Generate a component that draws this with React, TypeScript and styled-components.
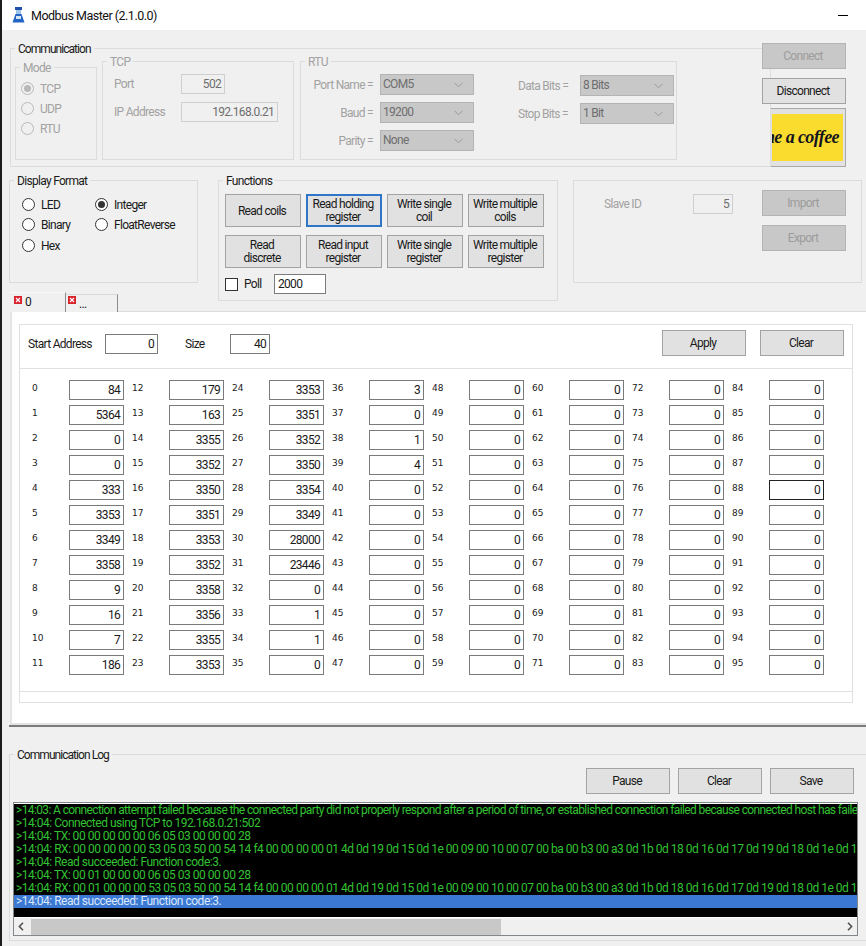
import * as React from "react";
import styled, { createGlobalStyle } from "styled-components";

const GlobalStyle = createGlobalStyle`
  html, body {
    margin: 0;
    padding: 0;
    background: #f0f0f0;
  }
  * {
    box-sizing: border-box;
  }
`;

const Window = styled.div`
  width: 866px;
  height: 946px;
  overflow: hidden;
  background: #f0f0f0;
  border-left: 2px solid #1c1c1c;
  color: #1a1a1a;
  font-family: Roboto, "Liberation Sans", sans-serif;
  font-size: 12px;
  line-height: 15px;
  letter-spacing: -0.7px;
`;

const TitleBar = styled.div`
  height: 30px;
  background: #fff;
  display: flex;
  align-items: center;
  padding-left: 10px;
  font-size: 12.5px;
  letter-spacing: -0.5px;
  color: #111;
`;
const TitleText = styled.span`
  margin-left: 6px;
`;
const MinimizeLine = styled.span`
  width: 10px;
  height: 1px;
  background: #000;
  margin-left: auto;
  margin-right: 18px;
`;

const TopRow = styled.div`
  display: flex;
  align-items: flex-start;
  padding: 13px 0 0 8px;
`;

const Group = styled.div<{ $w: number; $h: number; $mt?: number; $ml?: number }>`
  width: ${(p) => p.$w}px;
  height: ${(p) => p.$h}px;
  margin-top: ${(p) => p.$mt ?? 0}px;
  margin-left: ${(p) => p.$ml ?? 0}px;
  border: 1px solid #dcdcdc;
  flex: none;
`;
const Legend = styled.div<{ $off?: boolean; $tight?: boolean }>`
  width: fit-content;
  margin: -8px 0 -1px 4px;
  padding: 1px 3px 0;
  background: #f0f0f0;
  letter-spacing: ${(p) => (p.$tight ? "-0.95px" : "inherit")};
  color: ${(p) => (p.$off ? "#a2a2a2" : "#1a1a1a")};
`;

const CommRow = styled.div`
  display: flex;
  align-items: flex-end;
  gap: 5px;
  margin: 5px 0 0 4px;
`;

const ModeList = styled.div`
  display: flex;
  flex-direction: column;
  padding: 3px 0 0 5px;
`;
const OptionRow = styled.div<{ $off?: boolean }>`
  height: 20px;
  display: flex;
  align-items: center;
  gap: 6px;
  color: ${(p) => (p.$off ? "#a2a2a2" : "#1a1a1a")};
`;
const OptionText = styled.span`
  margin-top: 2px;
`;
const Radio = styled.span<{ $off?: boolean; $on?: boolean }>`
  width: 13px;
  height: 13px;
  flex: none;
  border-radius: 50%;
  border: 1px solid ${(p) => (p.$off ? "#b8b8b8" : "#333")};
  background: ${(p) => (p.$off ? "#f0f0f0" : "#fff")};
  display: flex;
  align-items: center;
  justify-content: center;
  &::after {
    content: "";
    width: 7px;
    height: 7px;
    border-radius: 50%;
    background: ${(p) => (p.$on ? (p.$off ? "#b8b8b8" : "#333") : "transparent")};
  }
`;

const TcpForm = styled.div`
  display: grid;
  grid-template-columns: 67px auto;
  justify-content: start;
  align-items: center;
  row-gap: 8px;
  padding: 5px 0 0 11px;
`;
const MutedLabel = styled.span`
  color: #a2a2a2;
`;
const TextBox = styled.div<{ $w: number; $off?: boolean; $focus?: boolean; $left?: boolean }>`
  width: ${(p) => p.$w}px;
  height: 20px;
  flex: none;
  padding: 1px ${(p) => (p.$left ? 0 : 3)}px 0 ${(p) => (p.$left ? 3 : 0)}px;
  display: flex;
  align-items: center;
  justify-content: ${(p) => (p.$left ? "flex-start" : "flex-end")};
  background: ${(p) => (p.$off ? "#f0f0f0" : "#fff")};
  color: ${(p) => (p.$off ? "#6e6e6e" : "#1a1a1a")};
  border: 1px solid ${(p) => (p.$off ? "#cfcfcf" : p.$focus ? "#222" : "#7a7a7a")};
`;

const RtuBody = styled.div`
  display: flex;
  padding-top: 5px;
`;
const RtuColumn = styled.div<{ $top: number; $gap: number; $ml?: number }>`
  display: flex;
  flex-direction: column;
  gap: ${(p) => p.$gap}px;
  padding-top: ${(p) => p.$top}px;
  margin-left: ${(p) => p.$ml ?? 0}px;
`;
const RtuRow = styled.div`
  display: flex;
  align-items: center;
`;
const RtuLabel = styled(MutedLabel)<{ $w: number; $right?: boolean }>`
  width: ${(p) => p.$w}px;
  padding-top: 2px;
  text-align: ${(p) => (p.$right ? "right" : "left")};
`;
const Select = styled.div`
  width: 94px;
  height: 21px;
  margin-left: 7px;
  padding: 0 10px 0 2px;
  display: flex;
  align-items: center;
  justify-content: space-between;
  background: #c8c8c8;
  border: 1px solid #b4b4b4;
  color: #6e6e6e;
`;
const Chevron = () => (
  <svg width="9" height="6" viewBox="0 0 9 6" fill="none" stroke="#999" strokeWidth="1">
    <path d="M0.5 0.8 L4.5 4.8 L8.5 0.8" />
  </svg>
);

const SideColumn = styled.div`
  display: flex;
  flex-direction: column;
  margin-left: -9px;
  flex: none;
`;
const WinButton = styled.button<{ $w?: number; $h?: number; $off?: boolean; $focus?: boolean; $mt?: number }>`
  width: ${(p) => p.$w ?? 84}px;
  height: ${(p) => p.$h ?? 26}px;
  margin-top: ${(p) => p.$mt ?? 0}px;
  flex: none;
  padding: 1px 2px 0 0;
  font: inherit;
  line-height: 13px;
  letter-spacing: inherit;
  cursor: default;
  background: ${(p) => (p.$off ? "#c8c8c8" : "#e1e1e1")};
  color: ${(p) => (p.$off ? "#9c9c9c" : "#1a1a1a")};
  border: ${(p) => (p.$focus ? "2px solid #2f76c8" : `1px solid ${p.$off ? "#b4b4b4" : "#a3a3a3"}`)};
`;
const CoffeeButton = styled.div`
  width: 75px;
  height: 59px;
  margin: 4px 0 0 9px;
  padding: 5px 2px 5px 1px;
  background: #e1e1e1;
  border: 1px solid #a8a8a8;
  border-left: none;
`;
const CoffeeImage = styled.div`
  height: 100%;
  background: #f9dc2e;
  color: #14141f;
  overflow: hidden;
  display: flex;
  align-items: center;
  justify-content: flex-end;
  padding-right: 4px;
  white-space: nowrap;
  font-family: "Liberation Serif", serif;
  font-style: italic;
  font-weight: bold;
  font-size: 18px;
  letter-spacing: -0.6px;
`;

const MiddleRow = styled.div`
  display: flex;
  align-items: flex-start;
  margin-top: 13px;
  padding-left: 7px;
  height: 131px;
`;
const LeftStack = styled.div`
  width: 209px;
  flex: none;
`;
const FormatGrid = styled.div`
  display: grid;
  grid-template-columns: 73px auto;
  grid-auto-flow: column;
  grid-template-rows: repeat(3, 20.5px);
  padding: 6px 0 0 12px;
`;
const FunctionGrid = styled.div`
  display: grid;
  grid-template-columns: repeat(4, 76px);
  grid-auto-rows: 33px;
  gap: 8px 5px;
  padding: 6px 0 0 6px;
`;
const PollRow = styled.div`
  display: flex;
  align-items: center;
  margin: 6px 0 0 6px;
`;
const CheckBox = styled.span`
  width: 13px;
  height: 13px;
  background: #fff;
  border: 1px solid #333;
  margin-right: 6px;
`;
const PollLabel = styled.span`
  width: 30px;
`;
const SlaveBody = styled.div`
  display: flex;
  align-items: flex-start;
  padding-left: 30px;
`;
const SlaveLabel = styled(MutedLabel)`
  width: 89px;
  margin-top: 16px;
`;
const SlaveField = styled.div`
  margin-top: 13px;
  margin-right: 29px;
`;
const SlaveButtons = styled.div`
  display: flex;
  flex-direction: column;
  gap: 9px;
  padding-top: 9px;
`;

const TabStrip = styled.div`
  display: flex;
  align-items: flex-end;
  height: 20px;
  margin: 9px 0 0 1px;
`;
const Tab = styled.div<{ $active?: boolean }>`
  height: ${(p) => (p.$active ? 20 : 18)}px;
  width: ${(p) => (p.$active ? 56 : 52)}px;
  display: flex;
  align-items: flex-start;
  gap: 3px;
  padding: ${(p) => (p.$active ? "3px 0 0 4px" : "1px 0 0 2px")};
  background: #f0f0f0;
  border-top: 1px solid ${(p) => (p.$active ? "#fafafa" : "#d8d8d8")};
  border-right: 1px solid #8c8c8c;
  line-height: ${(p) => (p.$active ? 12 : 17)}px;
`;
const CloseGlyph = styled.svg`
  flex: none;
`;
const CloseIcon = () => (
  <CloseGlyph width="8" height="8" viewBox="0 0 8 8">
    <rect width="8" height="8" fill="#d8232c" />
    <path d="M2 2 L6 6 M6 2 L2 6" stroke="#fff" strokeWidth="1.2" />
  </CloseGlyph>
);

const TabPanel = styled.div`
  height: 414px;
  margin-left: 8px;
  padding: 12px 12px 0 7px;
  background: #fff;
  border-top: 1px solid #dcdcdc;
  border-left: 2px solid #e4e4e4;
  border-bottom: 2px solid #e4e4e4;
`;
const RegisterBox = styled.div`
  width: 834px;
  height: 379px;
  display: flex;
  flex-direction: column;
  border: 1px solid #e0e0e0;
`;
const RegisterToolbar = styled.div`
  display: flex;
  align-items: center;
  padding: 5px 8px 12px 8px;
  border-bottom: 1px solid #e0e0e0;
`;
const ToolbarLabel = styled.span<{ $w: number }>`
  width: ${(p) => p.$w}px;
  flex: none;
  margin-top: 2px;
`;
const ToolbarField = styled.div`
  margin: 2px 27px 0 0;
`;
const ToolbarButtons = styled.div`
  display: flex;
  gap: 14px;
  margin-left: auto;
`;
const RegisterGrid = styled.div`
  display: grid;
  grid-auto-flow: column;
  grid-template-rows: repeat(12, 25px);
  grid-auto-columns: 100px;
  padding: 11px 0 0 12px;
`;
const RegisterCell = styled.div`
  display: flex;
  align-items: flex-start;
`;
const RegisterIndex = styled.span`
  width: 37px;
  flex: none;
  font-family: "DejaVu Sans", sans-serif;
  font-size: 9px;
  line-height: 16px;
  letter-spacing: 0;
`;
const RegisterFooter = styled.div`
  margin-top: auto;
  height: 11px;
  border-top: 1px solid #e0e0e0;
`;

const Splitter = styled.div`
  height: 2px;
  margin-left: 7px;
  background: #7c7c7c;
`;

const LogButtons = styled.div`
  display: flex;
  justify-content: flex-end;
  gap: 8px;
  margin-top: 6px;
  padding-right: 14px;
`;
const LogFrame = styled.div`
  width: 845px;
  height: 134px;
  margin: 8px 0 0 3px;
  padding-top: 1px;
  background: #fff;
  border: 1px solid #82878c;
`;
const LogList = styled.div`
  height: 113px;
  background: #000;
  overflow: hidden;
`;
const LogLine = styled.div<{ $selected?: boolean; $prose?: boolean }>`
  height: 13px;
  line-height: 13px;
  padding-left: 2px;
  white-space: nowrap;
  letter-spacing: ${(p) => (p.$prose ? "-0.62px" : "-0.48px")};
  color: ${(p) => (p.$selected ? "#dbe7f8" : "#33c233")};
  background: ${(p) => (p.$selected ? "#3a78d4" : "transparent")};
`;
const ScrollBar = styled.div`
  height: 17px;
  margin-top: 1px;
  display: flex;
  align-items: center;
  padding: 0 4px;
  background: #f0f0f0;
`;
const ScrollThumb = styled.div`
  width: 470px;
  height: 16px;
  margin-left: 7px;
  background: #c8c8c8;
`;
const ScrollArrow = styled.svg<{ $end?: boolean }>`
  flex: none;
  margin-left: ${(p) => (p.$end ? "auto" : "0")};
`;

const commands = [
  ["Read coils"],
  ["Read holding", "register"],
  ["Write single", "coil"],
  ["Write multiple", "coils"],
  ["Read", "discrete"],
  ["Read input", "register"],
  ["Write single", "register"],
  ["Write multiple", "register"],
];

const registers = [
  84, 5364, 0, 0, 333, 3353, 3349, 3358, 9, 16, 7, 186,
  179, 163, 3355, 3352, 3350, 3351, 3353, 3352, 3358, 3356, 3355, 3353,
  3353, 3351, 3352, 3350, 3354, 3349, 28000, 23446, 0, 1, 1, 0,
  3, 0, 1, 4, ...Array(56).fill(0),
];

const rx = (id: string) =>
  `>14:04: RX: 00 ${id} 00 00 00 53 05 03 50 00 54 14 f4 00 00 00 00 01 4d 0d 19 0d 15 0d 1e 00 09 00 10 00 07 00 ba 00 b3 00 a3 0d 1b 0d 18 0d 16 0d 17 0d 19 0d 18 0d 1e 0d 15 0d 1a`;

const logLines = [
  ">14:03: A connection attempt failed because the connected party did not properly respond after a period of time, or established connection failed because connected host has failed to respond",
  ">14:04: Connected using TCP to 192.168.0.21:502",
  ">14:04: TX: 00 00 00 00 00 06 05 03 00 00 00 28",
  rx("00"),
  ">14:04: Read succeeded: Function code:3.",
  ">14:04: TX: 00 01 00 00 00 06 05 03 00 00 00 28",
  rx("01"),
  ">14:04: Read succeeded: Function code:3.",
];

const AppIcon = () => (
  <svg width="13" height="16" viewBox="0 0 13 16">
    <rect x="3" y="0" width="7" height="3" fill="#1f4fa8" />
    <rect x="4" y="3" width="5" height="5" fill="#9fc4ea" />
    <path d="M3.5 7 H9.5 L12.5 15.5 H0.5 Z" fill="#2265c4" />
    <rect x="4" y="9" width="5" height="3" fill="#d5e6f7" />
  </svg>
);

const App = () => {
  return (
    <Window>
      <GlobalStyle />
      <TitleBar>
        <AppIcon />
        <TitleText>Modbus Master (2.1.0.0)</TitleText>
        <MinimizeLine />
      </TitleBar>

      <TopRow>
        <Group $w={761} $h={119} $mt={5}>
          <Legend $tight>Communication</Legend>
          <CommRow>
            <Group $w={82} $h={93}>
              <Legend $off>Mode</Legend>
              <ModeList>
                <OptionRow $off><Radio $off $on /><OptionText>TCP</OptionText></OptionRow>
                <OptionRow $off><Radio $off /><OptionText>UDP</OptionText></OptionRow>
                <OptionRow $off><Radio $off /><OptionText>RTU</OptionText></OptionRow>
              </ModeList>
            </Group>
            <Group $w={192} $h={99}>
              <Legend $off>TCP</Legend>
              <TcpForm>
                <MutedLabel>Port</MutedLabel>
                <TextBox $w={44} $off>502</TextBox>
                <MutedLabel>IP Address</MutedLabel>
                <TextBox $w={97} $off>192.168.0.21</TextBox>
              </TcpForm>
            </Group>
            <Group $w={377} $h={99} $ml={1}>
              <Legend $off>RTU</Legend>
              <RtuBody>
                <RtuColumn $top={0} $gap={7}>
                  <RtuRow><RtuLabel $w={72} $right>Port Name =</RtuLabel><Select>COM5<Chevron /></Select></RtuRow>
                  <RtuRow><RtuLabel $w={72} $right>Baud =</RtuLabel><Select>19200<Chevron /></Select></RtuRow>
                  <RtuRow><RtuLabel $w={72} $right>Parity =</RtuLabel><Select>None<Chevron /></Select></RtuRow>
                </RtuColumn>
                <RtuColumn $top={1} $gap={7} $ml={44}>
                  <RtuRow><RtuLabel $w={55}>Data Bits =</RtuLabel><Select>8 Bits<Chevron /></Select></RtuRow>
                  <RtuRow><RtuLabel $w={55}>Stop Bits =</RtuLabel><Select>1 Bit<Chevron /></Select></RtuRow>
                </RtuColumn>
              </RtuBody>
            </Group>
          </CommRow>
        </Group>
        <SideColumn>
          <WinButton $off>Connect</WinButton>
          <WinButton $mt={9}>Disconnect</WinButton>
          <CoffeeButton>
            <CoffeeImage>Buy me a coffee</CoffeeImage>
          </CoffeeButton>
        </SideColumn>
      </TopRow>

      <MiddleRow>
        <LeftStack>
          <Group $w={189} $h={103}>
            <Legend>Display Format</Legend>
            <FormatGrid>
              <OptionRow><Radio /><OptionText>LED</OptionText></OptionRow>
              <OptionRow><Radio /><OptionText>Binary</OptionText></OptionRow>
              <OptionRow><Radio /><OptionText>Hex</OptionText></OptionRow>
              <OptionRow><Radio $on /><OptionText>Integer</OptionText></OptionRow>
              <OptionRow><Radio /><OptionText>FloatReverse</OptionText></OptionRow>
            </FormatGrid>
          </Group>
          <TabStrip>
            <Tab $active><CloseIcon />0</Tab>
            <Tab><CloseIcon />...</Tab>
          </TabStrip>
        </LeftStack>
        <Group $w={340} $h={121}>
          <Legend>Functions</Legend>
          <FunctionGrid>
            {commands.map((lines, i) => (
              <WinButton key={i} $w={76} $h={33} $focus={i === 1}>
                {lines.map((line, j) => (
                  <React.Fragment key={j}>
                    {j > 0 && <br />}
                    {line}
                  </React.Fragment>
                ))}
              </WinButton>
            ))}
          </FunctionGrid>
          <PollRow>
            <CheckBox />
            <PollLabel>Poll</PollLabel>
            <TextBox $w={52} $left>2000</TextBox>
          </PollRow>
        </Group>
        <Group $w={289} $h={103} $ml={15}>
          <SlaveBody>
            <SlaveLabel>Slave ID</SlaveLabel>
            <SlaveField><TextBox $w={40} $off>5</TextBox></SlaveField>
            <SlaveButtons>
              <WinButton $off>Import</WinButton>
              <WinButton $off>Export</WinButton>
            </SlaveButtons>
          </SlaveBody>
        </Group>
      </MiddleRow>

      <TabPanel>
        <RegisterBox>
          <RegisterToolbar>
            <ToolbarLabel $w={77}>Start Address</ToolbarLabel>
            <ToolbarField><TextBox $w={53}>0</TextBox></ToolbarField>
            <ToolbarLabel $w={45}>Size</ToolbarLabel>
            <ToolbarField><TextBox $w={40}>40</TextBox></ToolbarField>
            <ToolbarButtons>
              <WinButton>Apply</WinButton>
              <WinButton>Clear</WinButton>
            </ToolbarButtons>
          </RegisterToolbar>
          <RegisterGrid>
            {registers.map((value, i) => (
              <RegisterCell key={i}>
                <RegisterIndex>{i}</RegisterIndex>
                <TextBox $w={55} $focus={i === 88}>{value}</TextBox>
              </RegisterCell>
            ))}
          </RegisterGrid>
          <RegisterFooter />
        </RegisterBox>
      </TabPanel>
      <Splitter />

      <Group $w={860} $h={187} $mt={27} $ml={7}>
        <Legend $tight>Communication Log</Legend>
        <LogButtons>
          <WinButton>Pause</WinButton>
          <WinButton>Clear</WinButton>
          <WinButton>Save</WinButton>
        </LogButtons>
        <LogFrame>
          <LogList>
            {logLines.map((line, i) => (
              <LogLine key={i} $selected={i === logLines.length - 1} $prose={i === 0}>{line}</LogLine>
            ))}
          </LogList>
          <ScrollBar>
            <ScrollArrow width="6" height="9" viewBox="0 0 6 9" fill="none" stroke="#505050" strokeWidth="1.6">
              <path d="M5 0.8 L1.4 4.5 L5 8.2" />
            </ScrollArrow>
            <ScrollThumb />
            <ScrollArrow $end width="6" height="9" viewBox="0 0 6 9" fill="none" stroke="#505050" strokeWidth="1.6">
              <path d="M1 0.8 L4.6 4.5 L1 8.2" />
            </ScrollArrow>
          </ScrollBar>
        </LogFrame>
      </Group>
    </Window>
  );
};

export default App;
